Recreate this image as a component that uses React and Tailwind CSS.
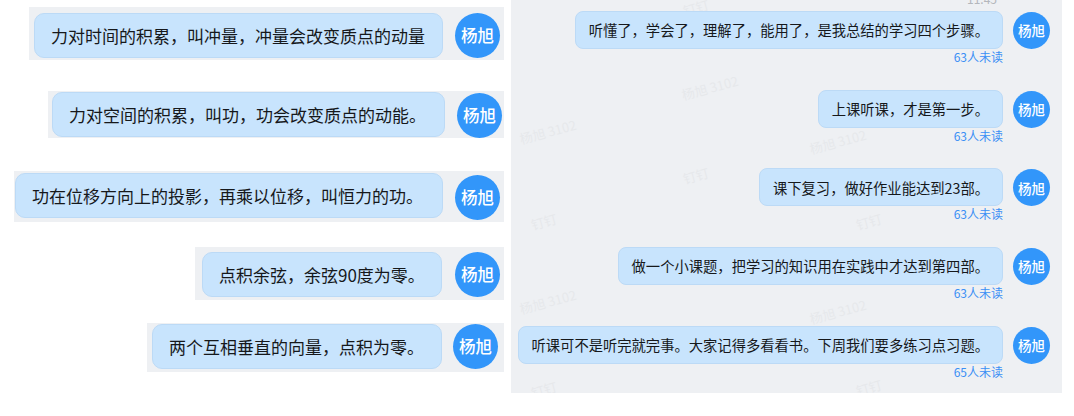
const font = { fontFamily: '"Noto Sans CJK SC", "Noto Sans", sans-serif' }

const strips = [
  { text: '力对时间的积累，叫冲量，冲量会改变质点的动量', w: 'w-[475px]', h: 'h-[53px]', mt: 'mt-[7px]', pl: 'pl-[5px]', pt: 'pt-[6px]', bw: 'w-[409px]', gap: 'gap-[12px]', am: 'mt-0' },
  { text: '力对空间的积累，叫功，功会改变质点的动能。', w: 'w-[456px]', h: 'h-[47px]', mt: 'mt-[31px]', pl: 'pl-[4px]', pt: 'pt-[1px]', bw: 'w-[393px]', gap: 'gap-[12px]', am: 'mt-[1px]' },
  { text: '功在位移方向上的投影，再乘以位移，叫恒力的功。', w: 'w-[490px]', h: 'h-[51px]', mt: 'mt-[33px]', pl: 'pl-[1px]', pt: 'pt-[2px]', bw: 'w-[428px]', gap: 'gap-[12px]', am: 'mt-[2px]' },
  { text: '点积余弦，余弦90度为零。', w: 'w-[309px]', h: 'h-[53px]', mt: 'mt-[25px]', pl: 'pl-[7px]', pt: 'pt-[5px]', bw: 'w-[240px]', gap: 'gap-[13px]', am: 'mt-0' },
  { text: '两个互相垂直的向量，点积为零。', w: 'w-[357px]', h: 'h-[49px]', mt: 'mt-[23px]', pl: 'pl-[5px]', pt: 'pt-[1px]', bw: 'w-[290px]', gap: 'gap-[11px]', am: 'mt-0' },
]

const messages = [
  { text: '听懂了，学会了，理解了，能用了，是我总结的学习四个步骤。', unread: '63人未读' },
  { text: '上课听课，才是第一步。', unread: '63人未读' },
  { text: '课下复习，做好作业能达到23部。', unread: '63人未读' },
  { text: '做一个小课题，把学习的知识用在实践中才达到第四部。', unread: '63人未读' },
  { text: '听课可不是听完就完事。大家记得多看看书。下周我们要多练习点习题。', unread: '65人未读' },
]

// faint watermark tiles in the chat panel
const marks = [
  { t: '钉钉', c: 'left-[172px] top-[-2px]' },
  { t: '杨旭 3102', c: 'left-[170px] top-[78px]' },
  { t: '杨旭 3102', c: 'left-[8px] top-[122px]' },
  { t: '杨旭 3102', c: 'left-[298px] top-[132px]' },
  { t: '钉钉', c: 'left-[172px] top-[166px]' },
  { t: '钉钉', c: 'left-[20px] top-[212px]' },
  { t: '钉钉', c: 'left-[345px] top-[212px]' },
  { t: '杨旭 3102', c: 'left-[8px] top-[292px]' },
  { t: '杨旭 3102', c: 'left-[298px] top-[302px]' },
  { t: '钉钉', c: 'left-[20px] top-[380px]' },
  { t: '钉钉', c: 'left-[345px] top-[378px]' },
]

function Avatar({ size, text, className = '' }) {
  return (
    <div className={`${size} ${text} ${className} shrink-0 rounded-full bg-[#3296fa] text-white font-medium flex items-center justify-center`}>
      杨旭
    </div>
  )
}

function Strip({ s }) {
  return (
    <div className={`${s.w} ${s.h} ${s.mt} ${s.pl} ${s.pt} bg-[#eef0f3] flex items-start ${s.gap}`}>
      <div className={`${s.bw} h-[45px] rounded-[10px] border border-[#bcdaf6] bg-[#c8e4fd] pl-[16px] flex items-center text-[17px] text-[#16181b] whitespace-nowrap`}>
        {s.text}
      </div>
      <Avatar size="w-[45px] h-[45px]" text="text-[16.5px]" className={s.am} />
    </div>
  )
}

function Message({ m }) {
  return (
    <div className="flex items-start gap-[10px]">
      <div className="flex flex-col items-end">
        <div className="h-[38px] px-[13px] rounded-[8px] border border-[#bcdaf6] bg-[#c8e4fd] flex items-center text-[14.3px] text-[#16181b] whitespace-nowrap">
          {m.text}
        </div>
        <div className="mt-[1px] text-[12px] leading-[14px] text-[#3a8ff5]">{m.unread}</div>
      </div>
      <Avatar size="w-[37px] h-[37px]" text="text-[13.5px]" className="mt-[1px]" />
    </div>
  )
}

export default function App() {
  return (
    <div className="w-[1074px] h-[416px] bg-white flex items-start overflow-hidden" style={font}>
      <div className="w-[511px] flex flex-col items-end pr-[7px]">
        {strips.map((s, i) => (
          <Strip key={i} s={s} />
        ))}
      </div>

      <div className="relative w-[551px] h-[393px] bg-[#eef0f3] overflow-hidden">
        {marks.map((w, i) => (
          <div key={i} className={`absolute ${w.c} -rotate-[15deg] text-[13px] text-[#e6e8eb] whitespace-nowrap select-none`}>
            {w.t}
          </div>
        ))}
        <div className="relative flex flex-col items-end pr-[12px]">
          <div className="h-[11px] pr-[53px] overflow-hidden">
            <div className="-mt-[7px] text-[12px] leading-[12px] text-[#b4b7bc]">11:45</div>
          </div>
          <div className="flex flex-col items-end gap-[25.7px]">
            {messages.map((m, i) => (
              <Message key={i} m={m} />
            ))}
          </div>
        </div>
      </div>
    </div>
  )
}
